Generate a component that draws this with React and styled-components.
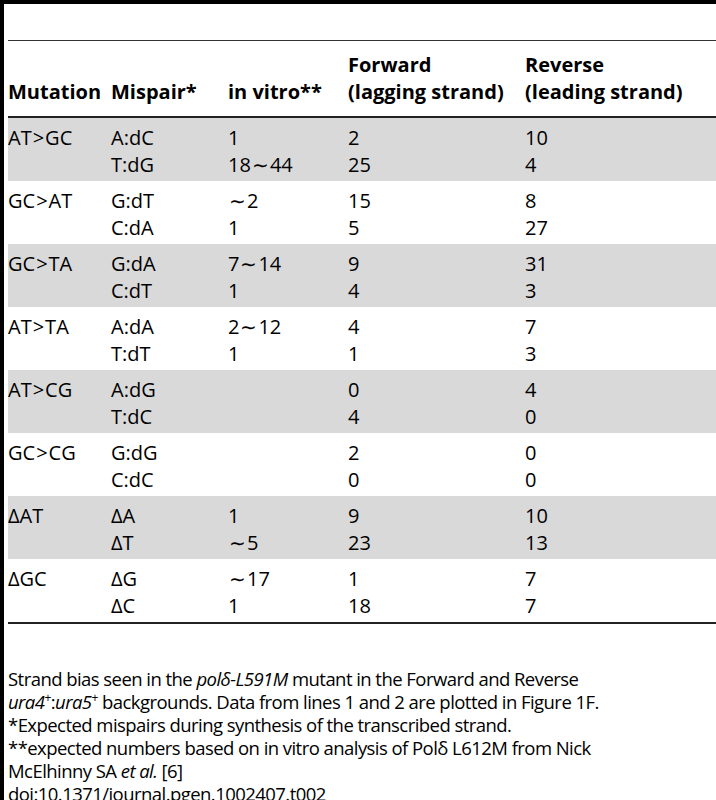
import React from 'react';
import styled, { createGlobalStyle } from 'styled-components';

const GlobalStyle = createGlobalStyle`
   body {
      margin: 0;
      background: #fff;
      font-family: 'Open Sans', 'Noto Sans', sans-serif;
      color: #000;
   }
`;

const rows = [
   { mut: 'AT>GC', pairs: ['A:dC', 'T:dG'], vitro: ['1', '18~44'], fwd: ['2', '25'], rev: ['10', '4'] },
   { mut: 'GC>AT', pairs: ['G:dT', 'C:dA'], vitro: ['~2', '1'], fwd: ['15', '5'], rev: ['8', '27'] },
   { mut: 'GC>TA', pairs: ['G:dA', 'C:dT'], vitro: ['7~14', '1'], fwd: ['9', '4'], rev: ['31', '3'] },
   { mut: 'AT>TA', pairs: ['A:dA', 'T:dT'], vitro: ['2~12', '1'], fwd: ['4', '1'], rev: ['7', '3'] },
   { mut: 'AT>CG', pairs: ['A:dG', 'T:dC'], vitro: ['', ''], fwd: ['0', '4'], rev: ['4', '0'] },
   { mut: 'GC>CG', pairs: ['G:dG', 'C:dC'], vitro: ['', ''], fwd: ['2', '0'], rev: ['0', '0'] },
   { mut: 'ΔAT', pairs: ['ΔA', 'ΔT'], vitro: ['1', '~5'], fwd: ['9', '23'], rev: ['10', '13'] },
   { mut: 'ΔGC', pairs: ['ΔG', 'ΔC'], vitro: ['~17', '1'], fwd: ['1', '18'], rev: ['7', '7'] },
];

// ">" and "~" are math signs in the source, set with a little air around them
const fmt = (s) =>
   s.split(/([>~])/).map((p, i) =>
      p === '>' ? <Sym key={i}>&gt;</Sym> : p === '~' ? <Sym key={i}>∼</Sym> : p
   );

const Frame = styled.div`
   border-top: 4px solid #000;
   border-left: 4px solid #000;
   min-height: 796px;
   padding-left: 4px;
   box-sizing: border-box;
`;

const Table = styled.table`
   width: 100%;
   border-collapse: collapse;
   margin-top: 36px;
   border-top: 1px solid #333;
   border-bottom: 2px solid #222;
   table-layout: fixed;
   font-size: 20px;
   line-height: 27px;
`;

const HeadRow = styled.tr`
   height: 76px;
   border-bottom: 2px solid #222;
`;

const Th = styled.th`
   text-align: left;
   vertical-align: bottom;
   font-weight: 700;
   padding: 0 0 11px 0;
   white-space: nowrap;
`;

const Row = styled.tr`
   background: ${({ shaded }) => (shaded ? '#d9d9d9' : '#fff')};
`;

const Td = styled.td`
   vertical-align: top;
   padding: 6px 0 3px 0;
   white-space: nowrap;
`;

const Line = styled.div`
   height: 27px;
`;

const Sym = styled.span`
   margin: 0 1px;
`;

const Notes = styled.div`
   margin-top: 43px;
   font-size: 18.5px;
   letter-spacing: -0.55px;
   line-height: 23px;
   white-space: nowrap;
`;

const Sup = styled.sup`
   font-size: 12px;
   line-height: 0;
   vertical-align: 7px;
`;

const Cell = ({ lines }) => (
   <Td>
      {lines.map((l, i) => (
         <Line key={i}>{fmt(l)}</Line>
      ))}
   </Td>
);

export default function App() {
   return (
      <>
         <GlobalStyle />
         <Frame>
            <Table>
               <colgroup>
                  <col style={{ width: 103 }} />
                  <col style={{ width: 117 }} />
                  <col style={{ width: 120 }} />
                  <col style={{ width: 177 }} />
                  <col />
               </colgroup>
               <thead>
                  <HeadRow>
                     <Th>Mutation</Th>
                     <Th>Mispair*</Th>
                     <Th>in vitro**</Th>
                     <Th>
                        Forward
                        <br />
                        (lagging strand)
                     </Th>
                     <Th>
                        Reverse
                        <br />
                        (leading strand)
                     </Th>
                  </HeadRow>
               </thead>
               <tbody>
                  {rows.map((r, i) => (
                     <Row key={r.mut} shaded={i % 2 === 0}>
                        <Cell lines={[r.mut]} />
                        <Cell lines={r.pairs} />
                        <Cell lines={r.vitro} />
                        <Cell lines={r.fwd} />
                        <Cell lines={r.rev} />
                     </Row>
                  ))}
               </tbody>
            </Table>
            <Notes>
               Strand bias seen in the <i>polδ-L591M</i> mutant in the Forward and Reverse
               <br />
               <i>ura4</i>
               <Sup>+</Sup>:<i>ura5</i>
               <Sup>+</Sup> backgrounds. Data from lines 1 and 2 are plotted in Figure 1F.
               <br />
               *Expected mispairs during synthesis of the transcribed strand.
               <br />
               **expected numbers based on in vitro analysis of Polδ L612M from Nick
               <br />
               McElhinny SA <i>et al.</i> [6]
               <br />
               doi:10.1371/journal.pgen.1002407.t002
            </Notes>
         </Frame>
      </>
   );
}
